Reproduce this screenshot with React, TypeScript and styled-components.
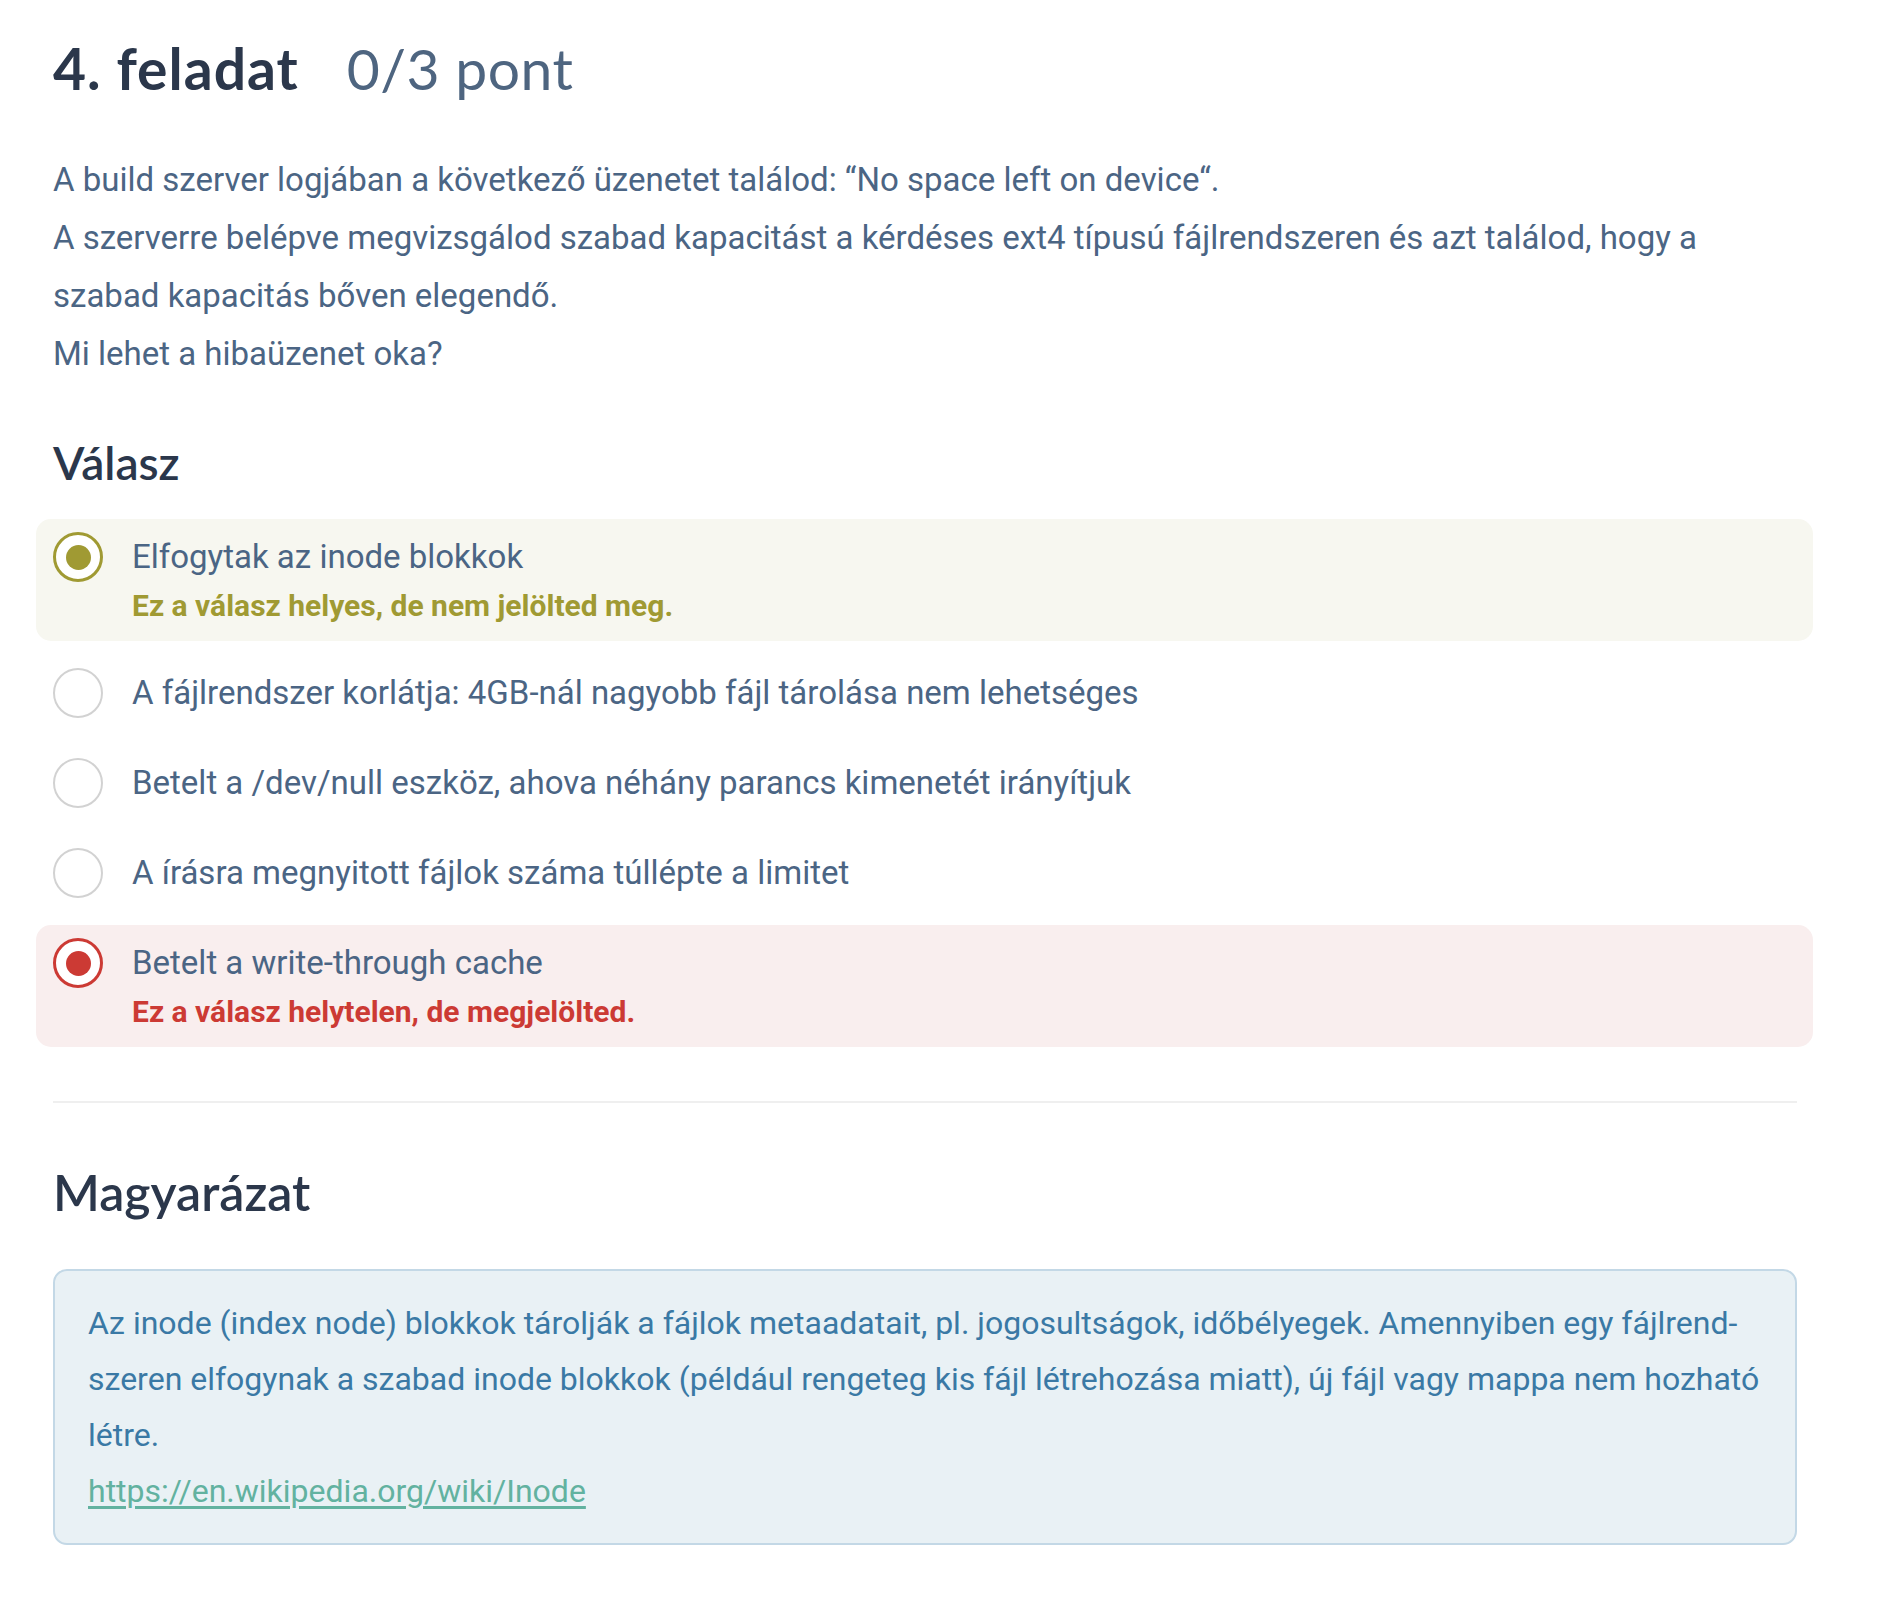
import React from "react";
import styled, { createGlobalStyle } from "styled-components";

const GlobalStyle = createGlobalStyle`
  html, body {
    margin: 0;
    padding: 0;
    background: #ffffff;
  }
  body {
    font-family: Roboto, "Liberation Sans", sans-serif;
  }
`;

const Page = styled.main`
  padding: 33px 89px 60px 53px;
  color: #4b6584;
  font-family: Roboto, "Liberation Sans", sans-serif;
`;

const TitleRow = styled.h1`
  display: flex;
  align-items: baseline;
  gap: 48px;
  margin: 0 0 48px;
  font-family: Lato, "Noto Sans", sans-serif;
  font-size: 57px;
  line-height: 70px;
  font-weight: 700;
  color: #2b374b;
`;

const TaskName = styled.span`
  letter-spacing: 1px;
`;

const Points = styled.span`
  font-weight: 400;
  color: #4e6580;
  letter-spacing: 0.5px;
`;

const Question = styled.div`
  font-size: 33px;
  line-height: 58px;
`;

const Line = styled.p`
  margin: 0;
`;

const SectionTitle = styled.h2<{ $size: number }>`
  margin: 0;
  font-family: Lato, "Noto Sans", sans-serif;
  font-weight: 600;
  font-size: ${(p) => p.$size}px;
  color: #2b374b;
`;

const AnswersTitle = styled(SectionTitle)`
  margin-top: 52px;
  line-height: 56px;
`;

const Options = styled.div`
  display: flex;
  flex-direction: column;
  gap: 14px;
  margin: 28px -16px 0 -17px;
`;

const Option = styled.div<{ $tone?: "ok" | "bad" }>`
  display: flex;
  align-items: flex-start;
  gap: 29px;
  padding: 9px 16px ${(p) => (p.$tone ? "15px" : "9px")} 17px;
  border-radius: 15px;
  background: ${(p) =>
    p.$tone === "ok" ? "#f7f7f0" : p.$tone === "bad" ? "#f9eeee" : "transparent"};
`;

const Radio = styled.span<{ $color?: string }>`
  flex: 0 0 auto;
  box-sizing: border-box;
  width: 50px;
  height: 50px;
  margin-top: 4px;
  border-radius: 50%;
  border: ${(p) => (p.$color ? `3px solid ${p.$color}` : "2.5px solid #d2d2d2")};
  background: #ffffff;
  display: flex;
  align-items: center;
  justify-content: center;
`;

const RadioDot = styled.span<{ $color: string }>`
  width: 25px;
  height: 25px;
  border-radius: 50%;
  background: ${(p) => p.$color};
`;

const OptionBody = styled.div`
  display: flex;
  flex-direction: column;
`;

const OptionLabel = styled.span`
  font-size: 33px;
  line-height: 58px;
  color: #4b6584;
`;

const Note = styled.span<{ $color: string }>`
  font-size: 30px;
  line-height: 40px;
  font-weight: 700;
  color: ${(p) => p.$color};
`;

const Divider = styled.hr`
  border: none;
  height: 2px;
  background: #efefef;
  margin: 54px 0 0;
`;

const ExplanationTitle = styled(SectionTitle)`
  margin-top: 56px;
  line-height: 66px;
`;

const Explanation = styled.div`
  margin-top: 44px;
  padding: 24px 33px 24px;
  border: 2px solid #c3d8e6;
  border-radius: 14px;
  background: #e9f1f5;
  color: #3a79a5;
  font-size: 32px;
  line-height: 56px;
`;

const Link = styled.a`
  color: #62b2a0;
  text-decoration: underline;
  text-underline-offset: 4px;
`;

const OLIVE = "#a09a33";
const RED = "#cc3a34";

const options = [
  { label: "A fájlrendszer korlátja: 4GB-nál nagyobb fájl tárolása nem lehetséges" },
  { label: "Betelt a /dev/null eszköz, ahova néhány parancs kimenetét irányítjuk" },
  { label: "A írásra megnyitott fájlok száma túllépte a limitet" },
];

export default function App() {
  return (
    <>
      <GlobalStyle />
      <Page>
        <TitleRow>
          <TaskName>4. feladat</TaskName>
          <Points>0/3 pont</Points>
        </TitleRow>
        <Question>
          <Line>A build szerver logjában a következő üzenetet találod: “No space left on device“.</Line>
          <Line>
            A szerverre belépve megvizsgálod szabad kapacitást a kérdéses ext4 típusú fájlrendszeren és azt
            találod, hogy a szabad kapacitás bőven elegendő.
          </Line>
          <Line>Mi lehet a hibaüzenet oka?</Line>
        </Question>

        <AnswersTitle $size={46}>Válasz</AnswersTitle>
        <Options>
          <Option $tone="ok">
            <Radio $color={OLIVE}>
              <RadioDot $color={OLIVE} />
            </Radio>
            <OptionBody>
              <OptionLabel>Elfogytak az inode blokkok</OptionLabel>
              <Note $color={OLIVE}>Ez a válasz helyes, de nem jelölted meg.</Note>
            </OptionBody>
          </Option>
          {options.map((o) => (
            <Option key={o.label}>
              <Radio />
              <OptionBody>
                <OptionLabel>{o.label}</OptionLabel>
              </OptionBody>
            </Option>
          ))}
          <Option $tone="bad">
            <Radio $color={RED}>
              <RadioDot $color={RED} />
            </Radio>
            <OptionBody>
              <OptionLabel>Betelt a write-through cache</OptionLabel>
              <Note $color={RED}>Ez a válasz helytelen, de megjelölted.</Note>
            </OptionBody>
          </Option>
        </Options>

        <Divider />

        <ExplanationTitle $size={50}>Magyarázat</ExplanationTitle>
        <Explanation>
          Az inode (index node) blokkok tárolják a fájlok metaadatait, pl. jogosultságok, időbélyegek.
          Amennyiben egy fájlrend{"\u00AD"}szeren elfogynak a szabad inode blokkok (például rengeteg kis fájl
          létrehozása miatt), új fájl vagy mappa nem hozható létre.
          <br />
          <Link href="#">https://en.wikipedia.org/wiki/Inode</Link>
        </Explanation>
      </Page>
    </>
  );
}
